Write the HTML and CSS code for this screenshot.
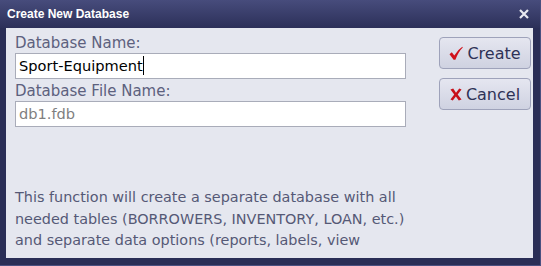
FILE: index.html
```html
<!DOCTYPE html>
<html lang="en">
<head>
  <meta charset="UTF-8">
  <title>Create New Database</title>
  <link rel="stylesheet" href="styles.css">
</head>
<body>
  <div class="window">
    <div class="titlebar">
      <span class="title">Create New Database</span>
      <svg class="close" width="10" height="10" viewBox="0 0 10 10"><path d="M1 1 L9 9 M9 1 L1 9" stroke="#e8e9f0" stroke-width="2.2"/></svg>
    </div>
    <div class="dialog-body">
      <div class="top-row">
        <form class="fields" id="dbForm">
          <label for="dbName">Database Name:</label>
          <div class="input focused" id="dbName">Sport-Equipment<span class="caret"></span></div>
          <label for="dbFile">Database File Name:</label>
          <div class="input placeholder" id="dbFile">db1.fdb</div>
        </form>
        <div class="buttons">
          <button type="button" class="btn">
            <svg width="14" height="15" viewBox="0 0 14 14"><path d="M0.5 7.8 L2.8 5.8 L5.3 9 Q8.8 3.2 13.3 0.3 L13.8 1 Q9.6 5 6.4 13.2 L4.6 13.2 Z" fill="#d0121c"/></svg>
            Create
          </button>
          <button type="button" class="btn">
            <svg width="12" height="13" viewBox="0 0 13 14"><path d="M0.5 1.5 L3.5 0.5 L6.5 5 L10 0.5 L12.5 1.5 L8.3 7 L12.5 12.5 L9.5 13.5 L6.4 9.2 L3 13.5 L0.5 12.5 L4.6 7 Z" fill="#c8101a"/></svg>
            Cancel
          </button>
        </div>
      </div>
      <p class="info">This function will create a separate database with all<br>needed tables (BORROWERS, INVENTORY, LOAN, etc.)<br>and separate data options (reports, labels, view</p>
    </div>
  </div>
</body>
</html>
```

FILE: styles.css
```css
body {
  margin: 0;
  font-family: "DejaVu Sans", sans-serif;
  background-color: #2a2e56;
}

.window {
  width: 541px;
  height: 266px;
  box-sizing: border-box;
  display: flex;
  flex-direction: column;
  background-color: #2a2e56;
  border-right: 1px solid #4a5080;
  border-bottom: 1px solid #4a5080;
}

.titlebar {
  height: 28px;
  display: flex;
  align-items: center;
  justify-content: space-between;
  padding: 0 11px 0 7px;
  background: linear-gradient(#474c7c, #2c3059);
  color: white;
  flex-shrink: 0;
}

.title {
  font-family: "Liberation Sans", sans-serif;
  font-size: 12px;
  font-weight: bold;
}

.dialog-body {
  margin: 0 7px 7px 6px;
  flex: 1;
  background-color: #e5e7ef;
  padding: 6px 2px 0 9px;
  overflow: hidden;
}

.top-row {
  display: flex;
  gap: 33px;
}

.fields {
  width: 391px;
  margin: 0;
}

.fields label {
  display: block;
  height: 19px;
  font-size: 15px;
  line-height: 19px;
  color: #5d617e;
}

.input {
  height: 26px;
  box-sizing: border-box;
  border: 1px solid #a9acb9;
  background-color: white;
  padding: 0 3px;
  font-size: 14.6px;
  line-height: 24px;
  color: black;
  margin-bottom: 3px;
}

.input.placeholder {
  color: #7f7f7f;
}

.caret {
  display: inline-block;
  width: 1px;
  height: 19px;
  background-color: black;
  vertical-align: -4px;
}

.buttons {
  margin-top: 3px;
  display: flex;
  flex-direction: column;
  gap: 9px;
}

.btn {
  width: 92px;
  height: 32px;
  display: flex;
  align-items: center;
  justify-content: center;
  gap: 4px;
  border: 1px solid #9ea2ba;
  border-radius: 4px;
  background: linear-gradient(#e5e6f0, #cfd2e1);
  font-family: "DejaVu Sans", sans-serif;
  font-size: 16px;
  color: #2e3256;
  padding: 0;
}

.info {
  margin: 57px 0 0;
  font-size: 14.4px;
  line-height: 21.5px;
  color: #555976;
}
```
